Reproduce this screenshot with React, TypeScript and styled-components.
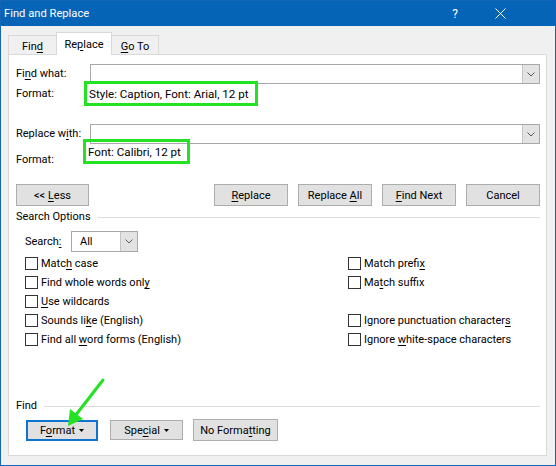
import React from "react";
import styled, { createGlobalStyle } from "styled-components";

const GlobalStyle = createGlobalStyle`
  html, body { margin: 0; padding: 0; }
  body { width: 556px; height: 466px; overflow: hidden; background: #f0f0f0; }
  * { box-sizing: border-box; }
`;

const Window = styled.div`
  position: relative;
  width: 556px;
  height: 466px;
  display: flex;
  flex-direction: column;
  background: #f0f0f0;
  border: 1px solid #1665b5;
  font-family: Roboto, "Liberation Sans", sans-serif;
  font-size: 11px;
  color: #000;
`;

const TitleBar = styled.div`
  height: 25px;
  flex: none;
  background: #0664b6;
  color: #fff;
  display: flex;
  align-items: center;
  padding-left: 3px;
  font-size: 11.2px;
`;

const TitleText = styled.div`
  flex: 1;
`;

const HelpGlyph = styled.div`
  width: 12px;
  text-align: center;
  font-size: 12px;
  margin-right: 33px;
`;

const CloseGlyph = styled.div`
  width: 12px;
  height: 12px;
  display: flex;
  align-items: center;
  justify-content: center;
  margin-right: 49px;
`;

const Body = styled.div`
  flex: 1;
  display: flex;
  flex-direction: column;
  padding: 6px 8px 8px 7px;
`;

const TabRow = styled.div`
  display: flex;
  align-items: flex-end;
  height: 23px;
  margin-bottom: -1px;
`;

const Tab = styled.div<{ $active?: boolean; $w: number }>`
  position: relative;
  z-index: ${(p) => (p.$active ? 2 : 1)};
  width: ${(p) => p.$w}px;
  height: ${(p) => (p.$active ? 23 : 20)}px;
  background: ${(p) => (p.$active ? "#fff" : "#f0f0f0")};
  border: 1px solid #d9d9d9;
  border-bottom: ${(p) => (p.$active ? "none" : "1px solid #d9d9d9")};
  display: flex;
  justify-content: center;
  align-items: center;
  padding-top: ${(p) => (p.$active ? 0 : 2)}px;
  & + & { margin-left: -1px; }
`;

const Panel = styled.div`
  height: 402px;
  background: #fff;
  border: 1px solid #d9d9d9;
  display: flex;
  flex-direction: column;
  padding: 9px 6px 14px 7px;
`;

const Row = styled.div<{ $mt?: number; $h: number; $start?: boolean }>`
  display: flex;
  align-items: ${(p) => (p.$start ? "flex-start" : "center")};
  height: ${(p) => p.$h}px;
  margin-top: ${(p) => p.$mt ?? 0}px;
`;

const Label = styled.div<{ $w?: number; $mt?: number }>`
  width: ${(p) => (p.$w ? `${p.$w}px` : "auto")};
  flex: none;
  line-height: 16px;
  white-space: nowrap;
  margin-top: ${(p) => p.$mt ?? 0}px;
`;

const Key = styled.span`
  text-decoration: underline;
  text-underline-offset: 2px;
  text-decoration-thickness: 1px;
`;

const Combo = styled.div<{ $w?: number; $h: number }>`
  ${(p) => (p.$w ? `width: ${p.$w}px; flex: none;` : "flex: 1;")}
  height: ${(p) => p.$h}px;
  border: 1px solid #a8a8a8;
  background: #fff;
  display: flex;
  align-items: stretch;
`;

const ComboText = styled.div`
  flex: 1;
  display: flex;
  align-items: center;
  padding-left: 8px;
`;

const DropBtn = styled.div`
  width: 17px;
  flex: none;
  background: #e3e3e3;
  border-left: 1px solid #c4c4c4;
  display: flex;
  align-items: center;
  justify-content: center;
`;

const GreenBox = styled.div`
  height: 25px;
  border: 3px solid #22e222;
  padding: 0 6px 0 2px;
  display: flex;
  align-items: center;
  white-space: nowrap;
  font-size: 11.6px;
`;

const ButtonRow = styled.div`
  display: flex;
  justify-content: space-between;
  align-items: center;
  height: 22px;
  margin-top: 20px;
`;

const ButtonGroup = styled.div<{ $gap: number }>`
  display: flex;
  align-items: center;
  gap: ${(p) => p.$gap}px;
`;

const Button = styled.div<{ $w: number; $h?: number; $focus?: boolean; $ml?: number }>`
  width: ${(p) => p.$w}px;
  height: ${(p) => p.$h ?? 22}px;
  margin-left: ${(p) => p.$ml ?? 0}px;
  background: #e1e1e1;
  border: ${(p) => (p.$focus ? "2px solid #0f74d0" : "1px solid #adadad")};
  display: flex;
  align-items: center;
  justify-content: center;
  gap: 4px;
  white-space: nowrap;
`;

const SectionHead = styled.div<{ $mt: number }>`
  display: flex;
  align-items: center;
  height: 16px;
  margin-top: ${(p) => p.$mt}px;
`;

const Rule = styled.div`
  flex: 1;
  height: 1px;
  background: #dcdcdc;
  margin-left: 7px;
`;

const SearchRow = styled.div`
  display: flex;
  align-items: center;
  height: 21px;
  margin-top: 6px;
  padding-left: 9px;
`;

const OptionsGrid = styled.div`
  display: grid;
  grid-template-columns: 323px 1fr;
  grid-auto-rows: 19px;
  margin-top: 2px;
  padding-left: 9px;
`;

const CheckItem = styled.div<{ $col: number; $row: number }>`
  grid-column: ${(p) => p.$col};
  grid-row: ${(p) => p.$row};
  display: flex;
  align-items: center;
  gap: 3px;
  white-space: nowrap;
`;

const Box = styled.div`
  width: 13px;
  height: 13px;
  border: 1px solid #333;
  background: #fff;
  flex: none;
`;

const FindSection = styled.div`
  margin-top: auto;
  display: flex;
  flex-direction: column;
`;

const BottomButtons = styled.div`
  display: flex;
  align-items: center;
  margin-top: 5px;
  padding-left: 10px;
  height: 22px;
`;

const ArrowOverlay = styled.svg`
  position: absolute;
  left: 50px;
  top: 368px;
  pointer-events: none;
`;

const Chevron = () => (
  <svg width="8" height="5" viewBox="0 0 8 5">
    <path d="M0.5 0.5 L4 4 L7.5 0.5" fill="none" stroke="#5a5a5a" strokeWidth="1" />
  </svg>
);

const Caret = () => (
  <svg width="5" height="3" viewBox="0 0 5 3">
    <path d="M0 0 H5 L2.5 3 Z" fill="#000" />
  </svg>
);

type Opt = { col: number; row: number; text: React.ReactNode };

const options: Opt[] = [
  { col: 1, row: 1, text: <>Matc<Key>h</Key> case</> },
  { col: 1, row: 2, text: <>Find whole words onl<Key>y</Key></> },
  { col: 1, row: 3, text: <><Key>U</Key>se wildcards</> },
  { col: 1, row: 4, text: <>Sounds li<Key>k</Key>e (English)</> },
  { col: 1, row: 5, text: <>Find all <Key>w</Key>ord forms (English)</> },
  { col: 2, row: 1, text: <>Match prefi<Key>x</Key></> },
  { col: 2, row: 2, text: <>Ma<Key>t</Key>ch suffix</> },
  { col: 2, row: 4, text: <>Ignore punctuation character<Key>s</Key></> },
  { col: 2, row: 5, text: <>Ignore <Key>w</Key>hite-space characters</> },
];

export default function App() {
  return (
    <>
      <GlobalStyle />
      <Window>
        <TitleBar>
          <TitleText>Find and Replace</TitleText>
          <HelpGlyph>?</HelpGlyph>
          <CloseGlyph>
            <svg width="11" height="11" viewBox="0 0 11 11">
              <path d="M0.5 0.5 L10.5 10.5 M10.5 0.5 L0.5 10.5" stroke="#fff" strokeWidth="1" />
            </svg>
          </CloseGlyph>
        </TitleBar>
        <Body>
          <TabRow>
            <Tab $w={49}><span>Fin<Key>d</Key></span></Tab>
            <Tab $w={56} $active><span>Re<Key>p</Key>lace</span></Tab>
            <Tab $w={48}><span><Key>G</Key>o To</span></Tab>
          </TabRow>
          <Panel>
            <Row $h={20}>
              <Label $w={74}>Fi<Key>n</Key>d what:</Label>
              <Combo $h={20}>
                <ComboText />
                <DropBtn><Chevron /></DropBtn>
              </Combo>
            </Row>
            <Row $h={25} $mt={-3}>
              <Label $w={68}>Format:</Label>
              <GreenBox>Style: Caption, Font: Arial, 12 pt</GreenBox>
            </Row>
            <Row $h={20} $mt={18}>
              <Label $w={74}>Replace w<Key>i</Key>th:</Label>
              <Combo $h={20}>
                <ComboText />
                <DropBtn><Chevron /></DropBtn>
              </Combo>
            </Row>
            <Row $h={25} $mt={-5} $start>
              <Label $w={67} $mt={13}>Format:</Label>
              <GreenBox>Font: Calibri, 12 pt</GreenBox>
            </Row>
            <ButtonRow>
              <Button $w={73}><span>&lt;&lt; <Key>L</Key>ess</span></Button>
              <ButtonGroup $gap={10}>
                <Button $w={74}><span><Key>R</Key>eplace</span></Button>
                <Button $w={74}><span>Replace <Key>A</Key>ll</span></Button>
                <Button $w={74}><span><Key>F</Key>ind Next</span></Button>
                <Button $w={74}><span>Cancel</span></Button>
              </ButtonGroup>
            </ButtonRow>
            <SectionHead $mt={3}>
              <Label>Search Options</Label>
              <Rule />
            </SectionHead>
            <SearchRow>
              <Label $w={46}>Search<Key>:</Key></Label>
              <Combo $w={67} $h={21}>
                <ComboText>All</ComboText>
                <DropBtn><Chevron /></DropBtn>
              </Combo>
            </SearchRow>
            <OptionsGrid>
              {options.map((o, i) => (
                <CheckItem key={i} $col={o.col} $row={o.row}>
                  <Box />
                  <span>{o.text}</span>
                </CheckItem>
              ))}
            </OptionsGrid>
            <FindSection>
              <SectionHead $mt={0}>
                <Label>Find</Label>
                <Rule />
              </SectionHead>
              <BottomButtons>
                <Button $w={72} $h={21} $focus><span>F<Key>o</Key>rmat</span><Caret /></Button>
                <Button $w={73} $h={20} $ml={12}><span>Spe<Key>c</Key>ial</span><Caret /></Button>
                <Button $w={85} $h={22} $ml={10}><span>No Forma<Key>t</Key>ting</span></Button>
              </BottomButtons>
            </FindSection>
          </Panel>
        </Body>
        <ArrowOverlay width="60" height="62" viewBox="50 368 60 62">
          <line x1="102" y1="379" x2="74" y2="415" stroke="#22e222" strokeWidth="3" strokeLinecap="round" />
          <polygon points="67,425 82,418 69,408" fill="#22e222" />
        </ArrowOverlay>
      </Window>
    </>
  );
}
